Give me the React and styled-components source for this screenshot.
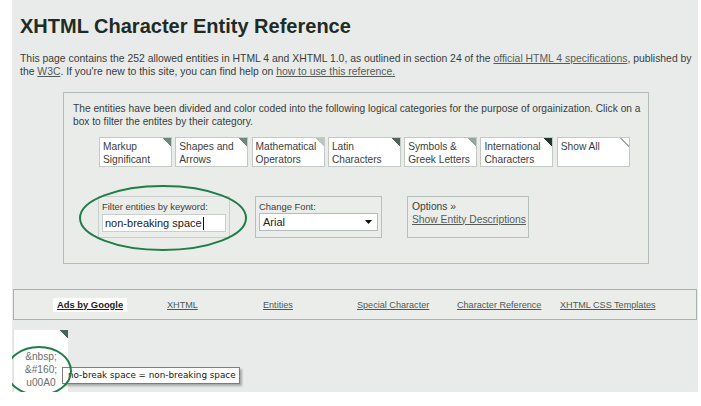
import React from 'react'
import styled, { createGlobalStyle } from 'styled-components'

const GlobalStyle = createGlobalStyle`
	html, body {
		margin: 0;
		padding: 0;
		background: #ffffff;
	}

	body {
		font-family: 'Liberation Sans', Arial, sans-serif;
		color: #333;
	}

	* {
		box-sizing: border-box;
	}
`

const Sheet = styled.div`
	margin-left: 12px;
	width: 686px;
	height: 392px;
	padding: 14px 1px 0 1px;
	background: #e8ebe9;
	overflow: hidden;
`

const Header = styled.header`
	padding-left: 7px;
`

const Title = styled.h1`
	margin: 0;
	font-size: 20px;
	line-height: 24px;
	font-weight: 700;
	color: #1f2b25;
`

const Intro = styled.p`
	margin: 14px 0 0 0;
	font-size: 10.4px;
	line-height: 13px;
	white-space: nowrap;
	color: #3a3d3b;
`

const TextLink = styled.a`
	color: #575c59;
	text-decoration: underline;
`

const Panel = styled.section`
	margin: 14px 0 0 50px;
	width: 586px;
	border: 1px solid #b4bcb7;
	padding: 9px 6px 25px 9px;
	background: #e9ece9;
`

const PanelText = styled.p`
	margin: 0;
	font-size: 10.2px;
	line-height: 13px;
	white-space: nowrap;
	color: #3a3d3b;
`

const Categories = styled.div`
	display: flex;
	gap: 3.3px;
	margin: 9px 0 0 26px;
`

const Category = styled.div`
	width: 73px;
	height: 30px;
	padding: 3px 3px 0 3px;
	border: 1px solid #c3c9c5;
	font-size: 10.2px;
	line-height: 12.5px;
	color: #3b3e3c;
	background: ${({ $corner }) =>
		$corner === 'none'
			? 'linear-gradient(225deg, #ffffff 0 5.6px, #a3aaa6 5.6px 6.4px, #ffffff 6.4px)'
			: `linear-gradient(225deg, ${$corner} 0 6px, #ffffff 6px)`};
`

const Controls = styled.div`
	position: relative;
	display: flex;
	gap: 25px;
	margin: 29px 0 0 25px;
`

const FieldBox = styled.div`
	flex: none;
	width: ${({ $width }) => $width}px;
	height: 42px;
	border: 1px solid ${({ $strong }) => ($strong ? '#b7bfba' : '#c9d0cb')};
	padding: ${({ $pad }) => $pad || '4px 3px 0 3px'};
	background: #eaedea;
`

const FieldLabel = styled.div`
	font-size: 9.4px;
	line-height: 12px;
	color: #3a3d3b;
`

const TextInput = styled.div`
	display: flex;
	align-items: center;
	width: 124px;
	height: 18px;
	margin-top: 1px;
	padding-left: 2px;
	border: 1px solid #c8cfca;
	background: #ffffff;
	font-size: 11px;
	color: #222;
	white-space: nowrap;
`

const Caret = styled.span`
	display: inline-block;
	width: 1px;
	height: 13px;
	margin-left: 1px;
	background: #111;
`

const SelectBox = styled.div`
	display: flex;
	align-items: center;
	justify-content: space-between;
	width: 119px;
	height: 18px;
	padding: 0 5px 0 3px;
	border: 1px solid #b5bdb8;
	background: #ffffff;
	font-size: 11px;
	color: #222;
`

const OptionsText = styled.div`
	font-size: 10.3px;
	line-height: 12.5px;
	white-space: nowrap;
	color: #3a3d3b;
`

const Ring = styled.svg`
	position: absolute;
	left: ${({ $x }) => $x}px;
	top: ${({ $y }) => $y}px;
	overflow: visible;
	pointer-events: none;
`

const AdBar = styled.nav`
	display: grid;
	grid-template-columns: 114px 96px 94px 100px 103px auto;
	align-items: center;
	height: 31px;
	margin-top: 25px;
	padding-left: 39px;
	border: 1px solid #a9b2ac;
	background: #eaedea;
`

const AdsLabel = styled.span`
	justify-self: start;
	padding: 1px 4px 2px 4px;
	background: #ffffff;
	font-size: 9.4px;
	font-weight: 700;
	color: #1d211f;
	text-decoration: underline;
`

const AdLink = styled.a`
	font-size: 9.1px;
	color: #4d5a53;
	text-decoration: underline;
	white-space: nowrap;
`

const Results = styled.div`
	position: relative;
	margin-top: 10px;
`

const EntityCard = styled.div`
	width: 55px;
	height: 62px;
	padding-top: 20px;
	border-left: 1px solid #dfe3e0;
	background: linear-gradient(225deg, #4c6358 0 6px, #ffffff 6px);
	text-align: center;
	font-size: 10.2px;
	line-height: 13px;
	color: #6b6e6c;
`

const Tooltip = styled.div`
	position: absolute;
	left: 49px;
	top: 37px;
	width: 178px;
	height: 17px;
	padding-left: 5px;
	border: 1px solid #7a7d7b;
	background: #ffffff;
	box-shadow: 2px 2px 2px rgba(0, 0, 0, 0.28);
	font-family: 'DejaVu Sans', Verdana, sans-serif;
	font-size: 8.8px;
	line-height: 15px;
	color: #161616;
	white-space: nowrap;
`

const categories = [
	{ label: ['Markup', 'Significant'], corner: '#6f887c' },
	{ label: ['Shapes and', 'Arrows'], corner: '#6f887c' },
	{ label: ['Mathematical', 'Operators'], corner: '#bcc5c0' },
	{ label: ['Latin', 'Characters'], corner: '#4f6559' },
	{ label: ['Symbols &', 'Greek Letters'], corner: '#95a69d' },
	{ label: ['International', 'Characters'], corner: '#1f3a2d' },
	{ label: ['Show All'], corner: 'none' },
]

const adLinks = ['XHTML', 'Entities', 'Special Character', 'Character Reference', 'XHTML CSS Templates']

const Ellipse = ({ x, y, rx, ry }) => (
	<Ring $x={x} $y={y} width={rx * 2} height={ry * 2} viewBox={`0 0 ${rx * 2} ${ry * 2}`}>
		<ellipse cx={rx} cy={ry} rx={rx - 1} ry={ry - 1} fill="none" stroke="#1f7e47" strokeWidth="2" />
	</Ring>
)

const App = () => (
	<>
		<GlobalStyle />
		<Sheet>
			<Header>
				<Title>XHTML Character Entity Reference</Title>
				<Intro>
					This page contains the 252 allowed entities in HTML 4 and XHTML 1.0, as outlined in section 24 of the{' '}
					<TextLink>official HTML 4 specifications</TextLink>, published by
					<br />
					the <TextLink>W3C</TextLink>. If you're new to this site, you can find help on{' '}
					<TextLink>how to use this reference.</TextLink>
				</Intro>
			</Header>

			<Panel>
				<PanelText>
					The entities have been divided and color coded into the following logical categories for the purpose of
					orgainization. Click on a
					<br />
					box to filter the entites by their category.
				</PanelText>

				<Categories>
					{categories.map(cat => (
						<Category key={cat.label[0]} $corner={cat.corner}>
							{cat.label.map(line => (
								<div key={line}>{line}</div>
							))}
						</Category>
					))}
				</Categories>

				<Controls>
					<FieldBox $width={132}>
						<FieldLabel>Filter entities by keyword:</FieldLabel>
						<TextInput>
							non-breaking space
							<Caret />
						</TextInput>
					</FieldBox>

					<FieldBox $width={127} $strong>
						<FieldLabel>Change Font:</FieldLabel>
						<SelectBox>
							Arial
							<svg width="7" height="4" viewBox="0 0 7 4">
								<path d="M0 0h7L3.5 4z" fill="#111" />
							</svg>
						</SelectBox>
					</FieldBox>

					<FieldBox $width={122} $strong $pad="4px 4px 0 4px">
						<OptionsText>Options »</OptionsText>
						<OptionsText>
							<TextLink>Show Entity Descriptions</TextLink>
						</OptionsText>
					</FieldBox>

					<Ellipse x={-19} y={-11} rx={84} ry={33} />
				</Controls>
			</Panel>

			<AdBar>
				<AdsLabel>Ads by Google</AdsLabel>
				{adLinks.map(link => (
					<AdLink key={link}>{link}</AdLink>
				))}
			</AdBar>

			<Results>
				<EntityCard>
					<div>&amp;nbsp;</div>
					<div>&amp;#160;</div>
					<div>u00A0</div>
				</EntityCard>
				<Tooltip>no-break space = non-breaking space</Tooltip>
				<Ellipse x={-7} y={16} rx={33} ry={25} />
			</Results>
		</Sheet>
	</>
)

export default App
